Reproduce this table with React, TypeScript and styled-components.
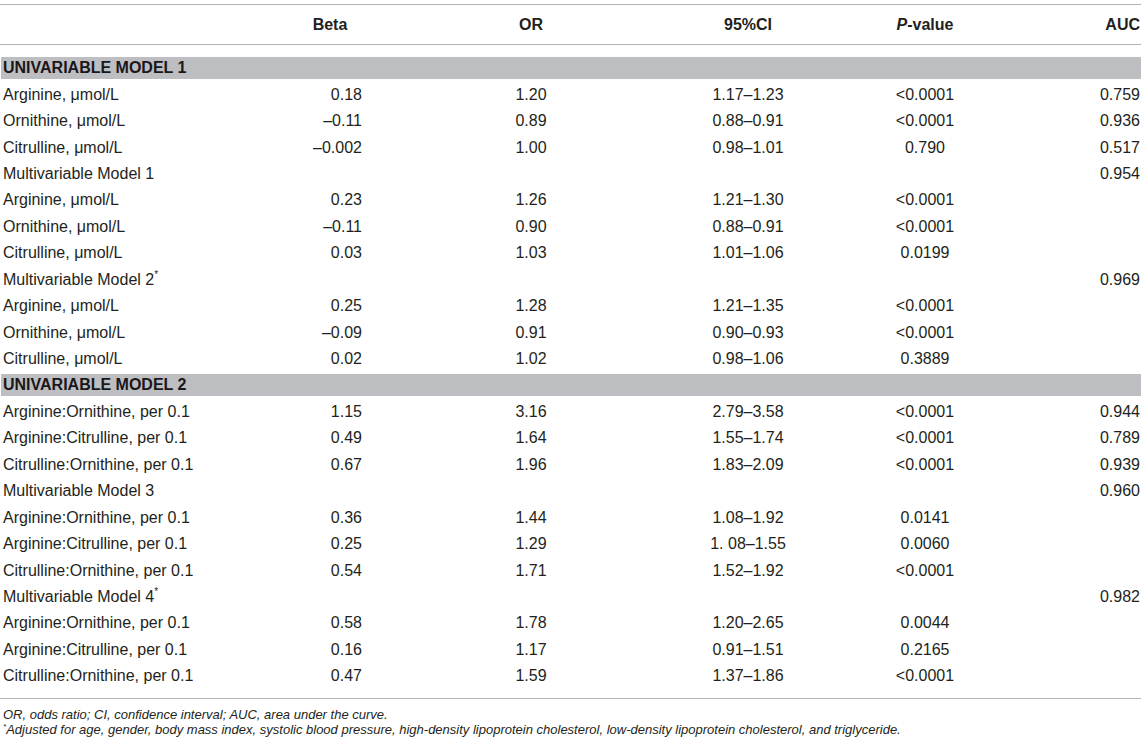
import React from "react";
import styled, { createGlobalStyle } from "styled-components";

const GlobalStyle = createGlobalStyle`
  html, body { margin: 0; padding: 0; background: #ffffff; }
  body { font-family: "Liberation Sans", Arial, Helvetica, sans-serif; color: #231f20; }
`;

const COLS = "230px 200px 202px 232px 122px 155px";

const Page = styled.div`
  width: 1141px;
  padding-top: 4px;
`;

const HeaderRow = styled.div`
  display: grid;
  grid-template-columns: ${COLS};
  height: 39px;
  align-items: center;
  border-top: 1px solid #b3b3b3;
  border-bottom: 1px solid #b3b3b3;
  font-size: 16px;
  font-weight: bold;
`;

const Body = styled.div`
  padding: 10px 0 8px;
  border-bottom: 1px solid #b3b3b3;
`;

const Row = styled.div`
  display: grid;
  grid-template-columns: ${COLS};
  height: 26.45px;
  align-items: center;
  font-size: 16px;
`;

const BandRow = styled.div`
  height: 26.45px;
  display: flex;
  align-items: center;
`;

const Band = styled.div`
  flex: 1;
  height: 22px;
  margin-left: 1px;
  background: #bdbec1;
  display: flex;
  align-items: center;
  padding-left: 2px;
  font-size: 16px;
  font-weight: bold;
  color: #1a1718;
`;

type Align = "left" | "center" | "right" | "beta";

const Cell = styled.div<{ $align: Align }>`
  white-space: nowrap;
  padding-left: ${(p) => (p.$align === "left" ? "3px" : "0")};
  padding-right: ${(p) =>
    p.$align === "beta" ? "68px" : p.$align === "right" ? "1px" : "0"};
  text-align: ${(p) =>
    p.$align === "beta" ? "right" : p.$align};
`;

const HeadCell = styled.div<{ $align: Align }>`
  white-space: nowrap;
  text-align: ${(p) => (p.$align === "beta" ? "center" : p.$align)};
  padding-right: ${(p) => (p.$align === "right" ? "1px" : "0")};
`;

const Sup = styled.sup`
  font-size: 10px;
  vertical-align: top;
  position: relative;
  top: -2px;
`;

const Footer = styled.div`
  padding-top: 8px;
  padding-left: 3px;
  font-size: 13px;
  font-style: italic;
  line-height: 15px;
`;

const Note = styled.div``;

const NoteStar = styled.span`
  font-size: 8px;
  vertical-align: top;
  position: relative;
  top: -3px;
`;

type DataRow =
  | { kind: "band"; label: string }
  | { kind: "data"; label: React.ReactNode; vals: string[] };

const U = "μmol/L";

const rows: DataRow[] = [
  { kind: "band", label: "UNIVARIABLE MODEL 1" },
  { kind: "data", label: `Arginine, ${U}`, vals: ["0.18", "1.20", "1.17–1.23", "<0.0001", "0.759"] },
  { kind: "data", label: `Ornithine, ${U}`, vals: ["–0.11", "0.89", "0.88–0.91", "<0.0001", "0.936"] },
  { kind: "data", label: `Citrulline, ${U}`, vals: ["–0.002", "1.00", "0.98–1.01", "0.790", "0.517"] },
  { kind: "data", label: "Multivariable Model 1", vals: ["", "", "", "", "0.954"] },
  { kind: "data", label: `Arginine, ${U}`, vals: ["0.23", "1.26", "1.21–1.30", "<0.0001", ""] },
  { kind: "data", label: `Ornithine, ${U}`, vals: ["–0.11", "0.90", "0.88–0.91", "<0.0001", ""] },
  { kind: "data", label: `Citrulline, ${U}`, vals: ["0.03", "1.03", "1.01–1.06", "0.0199", ""] },
  { kind: "data", label: <>Multivariable Model 2<Sup>*</Sup></>, vals: ["", "", "", "", "0.969"] },
  { kind: "data", label: `Arginine, ${U}`, vals: ["0.25", "1.28", "1.21–1.35", "<0.0001", ""] },
  { kind: "data", label: `Ornithine, ${U}`, vals: ["–0.09", "0.91", "0.90–0.93", "<0.0001", ""] },
  { kind: "data", label: `Citrulline, ${U}`, vals: ["0.02", "1.02", "0.98–1.06", "0.3889", ""] },
  { kind: "band", label: "UNIVARIABLE MODEL 2" },
  { kind: "data", label: "Arginine:Ornithine, per 0.1", vals: ["1.15", "3.16", "2.79–3.58", "<0.0001", "0.944"] },
  { kind: "data", label: "Arginine:Citrulline, per 0.1", vals: ["0.49", "1.64", "1.55–1.74", "<0.0001", "0.789"] },
  { kind: "data", label: "Citrulline:Ornithine, per 0.1", vals: ["0.67", "1.96", "1.83–2.09", "<0.0001", "0.939"] },
  { kind: "data", label: "Multivariable Model 3", vals: ["", "", "", "", "0.960"] },
  { kind: "data", label: "Arginine:Ornithine, per 0.1", vals: ["0.36", "1.44", "1.08–1.92", "0.0141", ""] },
  { kind: "data", label: "Arginine:Citrulline, per 0.1", vals: ["0.25", "1.29", "1. 08–1.55", "0.0060", ""] },
  { kind: "data", label: "Citrulline:Ornithine, per 0.1", vals: ["0.54", "1.71", "1.52–1.92", "<0.0001", ""] },
  { kind: "data", label: <>Multivariable Model 4<Sup>*</Sup></>, vals: ["", "", "", "", "0.982"] },
  { kind: "data", label: "Arginine:Ornithine, per 0.1", vals: ["0.58", "1.78", "1.20–2.65", "0.0044", ""] },
  { kind: "data", label: "Arginine:Citrulline, per 0.1", vals: ["0.16", "1.17", "0.91–1.51", "0.2165", ""] },
  { kind: "data", label: "Citrulline:Ornithine, per 0.1", vals: ["0.47", "1.59", "1.37–1.86", "<0.0001", ""] },
];

const valAligns: Align[] = ["beta", "center", "center", "center", "right"];

export default function App() {
  return (
    <>
      <GlobalStyle />
      <Page>
        <HeaderRow>
          <HeadCell $align="left" />
          <HeadCell $align="beta">Beta</HeadCell>
          <HeadCell $align="center">OR</HeadCell>
          <HeadCell $align="center">95%CI</HeadCell>
          <HeadCell $align="center">
            <i>P</i>-value
          </HeadCell>
          <HeadCell $align="right">AUC</HeadCell>
        </HeaderRow>
        <Body>
          {rows.map((r, i) =>
            r.kind === "band" ? (
              <BandRow key={i}>
                <Band>{r.label}</Band>
              </BandRow>
            ) : (
              <Row key={i}>
                <Cell $align="left">{r.label}</Cell>
                {r.vals.map((v, j) => (
                  <Cell key={j} $align={valAligns[j]}>
                    {v}
                  </Cell>
                ))}
              </Row>
            )
          )}
        </Body>
        <Footer>
          <Note>OR, odds ratio; CI, confidence interval; AUC, area under the curve.</Note>
          <Note>
            <NoteStar>*</NoteStar>Adjusted for age, gender, body mass index, systolic blood pressure,
            high-density lipoprotein cholesterol, low-density lipoprotein cholesterol, and triglyceride.
          </Note>
        </Footer>
      </Page>
    </>
  );
}
